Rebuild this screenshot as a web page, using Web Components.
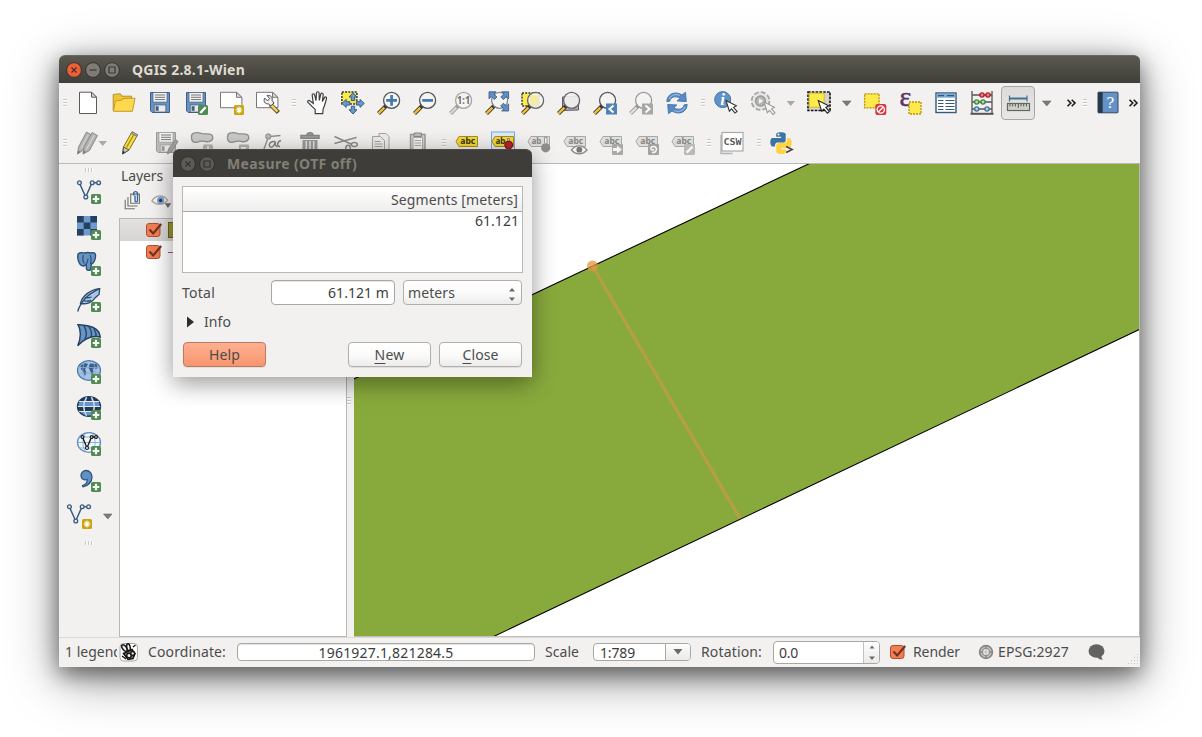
<!DOCTYPE html>
<html lang="en">
<head>
<meta charset="utf-8">
<title>QGIS 2.8.1-Wien</title>
<style>
  html, body { margin: 0; height: 100%; background: #fff; overflow: hidden; }
  body { font: 14px/20px "Noto Sans", "Open Sans", sans-serif; color: #4c4c4c; position: relative; box-sizing: border-box; padding: 55px 62px 70px 59px; }
</style>
</head>
<body>
<qgis-window></qgis-window>
<measure-dialog></measure-dialog>
<script>
const glass = (c = '#555', h = '#f5c02c', inner = '', o = '#333') => `
  <path d="M9 15 1.5 22.5" stroke="${o}" stroke-width="4"/><path d="M7.4 16.6 1.6 22.4" stroke="${h}" stroke-width="2.4"/>
  <circle cx="14.6" cy="9.4" r="8" fill="#f4f4f2" fill-opacity=".88" stroke="${c}" stroke-width="1.3"/>${inner}`;
const plus = `<rect x="14" y="14" width="10" height="10" rx="1.6" fill="#4f8c52"/><path d="M19 15.7v6.6M15.7 19h6.600" stroke="#fff" stroke-width="2.2"/>`;
const star = (x = 14, y = 14) => `<g transform="translate(${x} ${y})"><rect width="10" height="10" rx="1.6" fill="#c9a40c"/><path d="M5 1.600v6.800M1.600 5h6.800M2.700 2.700l4.600 4.600M7.300 2.700 2.700 7.300" stroke="#fff" stroke-width="1.100"/></g>`;
const floppy = (f, l) => `<path d="M2.5 1.5h19v20H4.2L2.5 19.8z" fill="${f}" stroke="${l}"/><rect x="5" y="1.5" width="14" height="9.6" fill="#f3f3ef" stroke="${l}" stroke-width=".7"/><path d="M7 4h10M7 6.3h10M7 8.6h10" stroke="#555" stroke-opacity=".8" stroke-width="1"/><rect x="6.2" y="14" width="11.6" height="7" fill="#ecebe6" stroke="${l}" stroke-width=".7"/><rect x="7.6" y="15.2" width="3" height="4.6" fill="${l}"/>`;
const label = (f, s, t, txt = 'abc', x = 12.8) => `<path d="M4 5.500h18.500v10H4L1 10.500z" fill="${f}" stroke="${s}"/><text x="${x}" y="13.400" font-size="9" font-weight="bold" font-family="Noto Sans, sans-serif" text-anchor="middle" textLength="${txt.length * 5}" lengthAdjust="spacingAndGlyphs" fill="${t}">${txt}</text>`;
const greyLabel = (t, x) => label('#dededc', '#a7a7a5', '#858583', t, x);
const vee = `<path d="M2.3 2.7 8.7 17 15 2.7h6.6" stroke="#3b5c7c" stroke-width="1.5" fill="none"/><g fill="#dfe9f2" stroke="#3b5c7c" stroke-width="1.3"><circle cx="2.4" cy="2.7" r="1.9"/><circle cx="8.8" cy="17" r="1.9"/><circle cx="15.2" cy="2.7" r="1.9"/><circle cx="21.6" cy="2.7" r="1.9"/></g>`;
const pointer = (x, y, f, s) => `<path transform="translate(${x} ${y})" d="M0 0 3.4 10.6 5.6 8.4 9 12.6 11 11 7.6 6.8 10.4 5.2z" fill="${f}" stroke="${s}" stroke-width="1.1"/>`;
const blob = `<path d="M1.5 6C1 1 8 1.2 12 2.6c4 .9 11-1 10.8 4 0 4-5 4.6-8 3.8-3-1-5-.2-8 .8C3 12 1.3 9.5 1.5 6z" fill="#cacac8" stroke="#8f8f8d" stroke-width="1.3"/>`;

const ICONS = {
  fileNew: `<path d="M3.5 1.2h12l5 5v16.3h-17z" fill="#fff" stroke="#5b5b5b"/><path d="M15.5 1.2v5h5z" fill="#d8d8d8" stroke="#5b5b5b"/>`,
  open: `<path d="M1.2 19.8V3.4L8.5 2.8l1.3 2.4h9.7V9" fill="#f3c432" stroke="#b3922a"/><path d="M1.5 20.3 3.3 10l6.7-1 1-1.6 12-.2-2.6 13.1z" fill="#ffd84d" stroke="#bf9c2b"/>`,
  save: floppy('#6892c4', '#3f5f84'),
  saveAs: floppy('#6892c4', '#3f5f84') + `<rect x="14" y="14" width="10" height="10" rx="1.6" fill="#4f8c52"/><path d="m16.3 22 5.3-5.8" stroke="#fff" stroke-width="2.4"/>`,
  composer: `<path d="M.5 1.3h16l5.4 5.2v10.2H.5z" fill="#fff" stroke="#777"/><path d="M16.5 1.3v5h5.4z" fill="#ddd" stroke="#777"/>` + star(),
  manager: `<path d="M.5 1.3h16l5.4 5.2v10.2H.5z" fill="#fff" stroke="#777"/><path d="M16.5 1.3v5h5.4z" fill="#ddd" stroke="#777"/><path d="m14.4 13.5 8 8" stroke="#5c4a18" stroke-width="4.4"/><path d="m15 14 6.6 6.6" stroke="#efcf69" stroke-width="2.6"/><path d="m8.800 7.200 2.700 2.700 2.200-2.300-2.600-3c3.400-.6 5.700 1.400 5 4.800l1.900 2.700-3.300 2.700-2.200-1.900c-3.400.4-5.600-2.600-3.700-5.700z" fill="#f0f0ee" stroke="#444"/>`,
  hand: `<g transform="translate(1.800 0)"><path d="M5.2 15.4 1 11.2C.2 10 2 9 3 9.8l3.500 2.600L5.400 4.300c-.2-1.800 2-2.100 2.400-.4L9.200 9.600 9.700 2c.1-1.700 2.500-1.700 2.600 0l.2 7.400 1.500-6.200c.4-1.500 2.600-1.200 2.400.5l-.9 6.800 2.200-3.900c.8-1.300 2.400-.4 2 1-1.400 5-1.600 7-3.300 10.200l-.5 4.900H8.400v-4.300z" fill="#fff" stroke="#3d3d3d" stroke-width="1.200"/></g>`,
  pan: `<rect x=".9" y=".9" width="15" height="12" fill="#fce94a" stroke="#333" stroke-width="1.5" stroke-dasharray="2 1.2"/><g fill="#6b98c9" stroke="#385f88" stroke-width="1"><path d="M12 1.800 16 6h-2.300v3.600h-3.400V6H8z"/><path d="M12 23 8 18.800h2.300v-3.600h3.400v3.600H16z"/><path d="M.9 12.400 5.200 8.400v2.300h3.600v3.400H5.200v2.300z"/><path d="m23.300 12.400-4.300-4v2.300h-3.600v3.400H19v2.300z"/></g>`,
  zoomIn: glass('#555', '#f5c02c', `<path d="M14.600 4v10.800M9.200 9.400H20" stroke="#4279ae" stroke-width="2.700"/>`),
  zoomOut: glass('#555', '#f5c02c', `<path d="M9.200 9.400H20" stroke="#4279ae" stroke-width="2.700"/>`),
  zoomOne: glass('#a4a4a2', '#d8d8d6', `<text x="14.600" y="13" text-anchor="middle" font-size="10" font-weight="bold" textLength="13" lengthAdjust="spacingAndGlyphs" font-family="Noto Sans,sans-serif" fill="#6f6f6d">1:1</text>`, '#999'),
  zoomFull: glass('#888') + `<g fill="#5f8fc3" stroke="#31557c" stroke-width=".8"><path d="M4 .8h7L8.900 3l3 3-2.600 2.600-3-3L4 7.800z"/><path d="M23.600.8v7l-2.200-2.200-3 3L15.800 6l3-3L16.600.8z"/><path d="M23.600 20h-7l2.200-2.200-3-3 2.600-2.600 3 3 2.200-2.200z"/></g>`,
  zoomSel: `<rect x="1" y="2" width="17" height="13" fill="#fce94a" stroke="#333" stroke-width="1.400" stroke-dasharray="2 1.200"/>` + glass('#666', '#f5c02c', `<path d="M9 4.500h8.500v9.500H9z" fill="#f3e98f" opacity=".75"/>`),
  zoomLayer: `<path d="m5.500 6 16-1v14l-16 .5z" fill="#b5a8b5" stroke="#67596a"/>` + glass('#666'),
  zoomLast: glass('#555') + `<rect x="13" y="12.500" width="11" height="11" fill="#4f82b6"/><path d="m20.500 14.600-4 3.400 4 3.400" fill="none" stroke="#fff" stroke-width="2"/>`,
  zoomNext: glass('#999', '#dededc', '', '#999') + `<rect x="13" y="12.500" width="11" height="11" fill="#a7a7a5"/><path d="m16.500 14.600 4 3.400-4 3.400" fill="none" stroke="#fff" stroke-width="2"/>`,
  refresh: `<g fill="#568ac2" stroke="#376ba6" stroke-width=".8"><path d="M1.800 10.500C2 3 10-.5 17 3.900l3.500-2.600.8 9.300-9.200-.6 3-2.700C10.500 4.400 5.300 6 4.800 10.300z"/><path d="M22.200 13.500C22 21 14 24.500 7 20.100l-3.500 2.600-.8-9.300 9.200.6-3 2.700c4.600 2.900 9.800 1.300 10.300-3z"/></g><path d="M4 8C6 3.500 11 2.500 15 4.500M20 16c-2 4.500-7 5.500-11 3.500" stroke="#8db4dd" fill="none" stroke-width="1.300"/>`,
  identify: `<circle cx="8.700" cy="8.600" r="8" fill="#5e93c9" stroke="#4474a7"/><text x="8.700" y="14" text-anchor="middle" font-family="Liberation Serif,serif" font-size="17" font-weight="bold" font-style="italic" fill="#fff">i</text>` + pointer(12, 9.500, '#fff', '#333'),
  action: `<circle cx="10.500" cy="10" r="8.600" fill="#e6e6e4" stroke="#a5a5a3" stroke-width="2.400" stroke-dasharray="4.800 1.950"/><circle cx="10.500" cy="10" r="8" fill="#e6e6e4"/><circle cx="10.500" cy="10" r="5" fill="#b5b5b3" stroke="#999997" stroke-width="1.400"/><path d="m9 7.200 4.400 2.800L9 12.800z" fill="#f2f1f0"/>` + pointer(14, 11, '#f6f6f4', '#999'),
  select: `<rect x="1" y="1" width="22" height="18.500" fill="#d2d2d0" stroke="#111" stroke-width="1.600" stroke-dasharray="2.600 1.200"/><path d="M2.200 2.200h15v14h-15z" fill="#fdeb4b" stroke="#d9bd1f"/>` + pointer(11.300, 9.600, '#fff', '#222'),
  deselect: `<g transform="translate(.8)"><rect x=".8" y="2.800" width="14.500" height="14" fill="#fce94a" stroke="#b98f12" stroke-width="1.300" stroke-dasharray="2 1"/><rect x="11.500" y="13" width="11" height="11" rx="2" fill="#d9353b"/><circle cx="17" cy="18.500" r="3.600" fill="none" stroke="#fff" stroke-width="1.400"/><path d="m14.500 21 5-5" stroke="#fff" stroke-width="1.400"/></g>`,
  expr: `<text x=".5" y="15" font-family="Liberation Serif,serif" font-size="28" fill="#5d3568" stroke="#5d3568" stroke-width=".5">ε</text><rect x="10" y="11" width="12" height="12" fill="#fce94a" stroke="#b98f12" stroke-width="1.300" stroke-dasharray="2 1"/>`,
  table: `<g transform="translate(-1)"><rect x="2" y="2" width="20" height="19.500" fill="#fff" stroke="#34597c" stroke-width="1.400"/><path d="M2.700 4.700h18.600" stroke="#7daad8" stroke-width="4"/><path d="M4 4.700h6M13 4.700h7M4 9.500h5.500M11.500 9.500h9M4 12.500h5.500M11.500 12.500h9M4 15.500h5.500M11.500 15.500h9M4 18.500h5.500M11.500 18.500h9" stroke="#34597c" stroke-width="1.200"/></g>`,
  abacus: `<path d="M2 0v23M22 0v23M2 4h20M2 11h20M2 18h20" stroke="#555" stroke-width="1.300"/><path d="M.5 22.800h23" stroke="#555" stroke-width="2"/><g stroke-width="1.400"><g fill="#ec8181" stroke="#b42025"><circle cx="12" cy="4" r="2.100"/><circle cx="18" cy="4" r="2.100"/></g><g fill="#aedba7" stroke="#418740"><circle cx="6.700" cy="11" r="2.100"/><circle cx="13" cy="11" r="2.100"/></g><g fill="#b6d0e8" stroke="#426f99"><circle cx="6.700" cy="18" r="2.100"/><circle cx="17" cy="18" r="2.100"/></g></g>`,
  ruler: `<path d="M3.500 7.500H21" stroke="#42708e" stroke-width="2"/><path d="M3.500 4.500v6M21 4.500v6" stroke="#42708e" stroke-width="1.200"/><rect x="1.500" y="12.500" width="22" height="7" fill="#cfd2c9" stroke="#626760" stroke-width="1.200"/><path d="M4 13v2.500M6.700 13v2.500M9.400 13v2.500M12.300 13v4M15 13v2.500M17.700 13v2.500M20.400 13v2.500" stroke="#555"/>`,
  help: `<rect x="2" y="1.200" width="20" height="20.600" rx=".6" fill="#6492c6" stroke="#30475e"/><rect x="2" y="1.200" width="4.700" height="20.600" fill="#273a4d"/><text x="14.300" y="16.700" font-size="15" text-anchor="middle" font-family="DejaVu Serif,serif" fill="#fff">?</text>`,
  chevrons: `<path d="m8.500 8.700 3.300 3.300-3.300 3.300M12.700 8.700 16 12l-3.300 3.300" fill="none" stroke="#1c1c1c" stroke-width="1.600"/>`,
  arrow: `<path d="M7.500 10H16l-4.200 5z" fill="#7b7b79" stroke="#656563" stroke-width=".6"/>`,
  arrowDim: `<path d="M7.500 10H16l-4.200 5z" fill="#a9a9a7"/>`,
  edits: `<g fill="#b2b2b0" stroke="#8d8d8b"><path d="m1.500 23 1-7L10.500 1 15.500 4 7.500 19z"/><path d="m7 23 1-7L16 1.500l5.500 3-8 15z"/></g><path d="M5 17.500 12.500 3.500M10.500 18l8-14" stroke="#d2d2d0" stroke-width="1.300"/><path d="m7 23 .8-3.500 2.200 1.500zM1.500 23l.8-3.500L4.500 21z" fill="#777"/>`,
  pencil: `<g transform="translate(1)"><path d="M3.600 23 4.500 16 13 .8 18.600 3.900 10 19z" fill="#f5e048" stroke="#7d6d1b"/><path d="M3.600 23 4.500 16l5.500 3z" fill="#c9c6bb" stroke="#555"/><path d="m3.600 23 .4-3 2 1.100z" fill="#222"/><path d="m12.200 2.300 5.600 3 .8-1.400L13 .8z" fill="#bbb" stroke="#777"/><path d="M7.500 16.500 14.500 4" stroke="#a3921b" stroke-width="1.400"/></g>`,
  saveEdit: floppy('#bcbcba', '#999997') + `<path d="m13.500 23 1-5 7-9.500 2.500 2-6.500 9.800z" fill="#a2a2a0" stroke="#8a8a88"/>`,
  blobA: blob + `<rect x="13" y="13.500" width="10" height="10" rx="1" fill="#b4b4b2"/><path d="M18 15v7M14.500 18.500h7" stroke="#eee" stroke-width="1.600"/>`,
  blobB: blob + `<rect x="13" y="13.500" width="10" height="10" rx="1" fill="#b4b4b2"/><path d="M15 22v-6h6z" fill="#eee"/>`,
  node: `<path d="M.5 22 6.500 5.500 18.500 4.500" fill="none" stroke="#8c8c8a" stroke-width="1.300"/><circle cx="6.300" cy="5.500" r="2.700" fill="#b5b5b3" stroke="#8c8c8a"/><path d="M13 10.500c-4-.5-6.500 2-5.500 4.500s5 1 6-4.500c-.5 3 0 5 2 5M19 9.500c-4 1-4.500 6-1 6" fill="none" stroke="#808080" stroke-width="1.400"/>`,
  trash: `<path d="M3 4.500h18v2.800H3zM9 4.300c0-3.300 6-3.300 6 0" fill="#a4a4a2" stroke="#858583" stroke-width="1.500"/><path d="M4.500 9h15v14h-15z" fill="#9a9a98"/><path d="M8.300 10v13M12 10v13M15.700 10v13" stroke="#e3e3e1" stroke-width="1.500"/>`,
  cut: `<path d="m.5 5.500 17.500 8M.5 12.500 22.500 6.500" stroke="#8c8c8a" stroke-width="1.600"/><g fill="none" stroke="#8c8c8a" stroke-width="1.500"><ellipse cx="20.300" cy="13.500" rx="3" ry="2"/><ellipse cx="14" cy="17.500" rx="2.300" ry="3.300"/></g>`,
  copy: `<g fill="#ececea" stroke="#a4a4a2"><path d="M9 2.500h7l3 3V20H9z"/><path d="M2.500 5.500h8l4 4V23h-12z"/></g><path d="M4.500 10.500h6M4.500 13h8M4.500 15.500h8" stroke="#a4a4a2"/>`,
  paste: `<path d="M4.500 3.500h14.500V23H4.500z" fill="#d0d0ce" stroke="#989896" stroke-width="1.400"/><path d="M7 6.500h9.500V22H7z" fill="#f3f3f1" stroke="#aaa"/><path d="M8 2h7.500v3.500H8z" fill="#bbb" stroke="#888"/><path d="M8.500 9.500h6.500M8.500 12h6.500M8.500 14.500h6.500" stroke="#aaa"/>`,
  labelOn: label('#f3d93a', '#a98f16', '#3b3509'),
  labelPin: `<rect x=".5" y="1" width="23" height="22" fill="#dceafa" stroke="#7aa9de"/>` + label('#f3d93a', '#a98f16', '#3b3509', 'ab', 9.500) + `<path d="M16.500 11V7.500h2V11" fill="#ddd" stroke="#777" stroke-width=".8"/><circle cx="17.700" cy="14" r="4" fill="#b3262b" stroke="#8a1015"/>`,
  labelA: greyLabel('ab', 9.500) + `<path d="M17.500 12V6.500H20v6" fill="#eee" stroke="#999"/><circle cx="18.700" cy="16.800" r="4.600" fill="#8e8e8c"/>`,
  labelEye: greyLabel() + `<path d="M8.500 19c4-5.600 11-5.600 15.500 0-4.500 5-11.500 5-15.500 0z" fill="#f5f5f3" stroke="#8a8a88" stroke-width="1.300"/><circle cx="16.300" cy="18.700" r="2.900" fill="#777"/>`,
  labelMove: greyLabel() + `<rect x="13" y="13" width="11" height="11" rx="1" fill="#a9a9a7"/><path d="M14 17h4v-2.500l5 4-5 4V20h-4z" fill="#f5f5f3"/>`,
  labelRot: greyLabel() + `<rect x="13" y="13" width="11" height="11" rx="1" fill="#a2a2a0"/><path d="M17 21.500c5 1 6-6 1.500-6s-2.500 5 .5 3" fill="none" stroke="#f5f5f3" stroke-width="1.600"/>`,
  labelEdit: greyLabel() + `<rect x="13" y="13" width="11" height="11" rx="1" fill="#b9b9b7"/><path d="m15.600 21.600 6-6" stroke="#f5f5f3" stroke-width="2.400"/>`,
  csw: `<path d="M1 4v18.500h11.500" fill="none" stroke="#b5b5b3" stroke-width="1.400"/><rect x="2" y="1.500" width="21" height="18.500" fill="#fff" stroke="#aaa" stroke-width="1.200"/><text x="12.500" y="13.500" text-anchor="middle" font-size="9" font-weight="bold" font-family="DejaVu Sans Mono,monospace" textLength="18" lengthAdjust="spacingAndGlyphs" fill="#5a5a5a">CSW</text>`,
  python: `<g transform="translate(-.8 0)"><path d="M7 5V3C7 .5 16.500.5 16.500 3v6c0 2-1 2.500-3 2.500H8.500c-2 0-2.700 1-2.700 4H3.500C.6 15.500 0 7 3.500 7H12V5.800H7z" fill="#3c73a4"/><path d="M17 18.500v2c0 3.400-10 3.400-10 0v-5.600c0-2 1-2.900 3-2.900h4.700c2.500 0 3.300-1.500 3.300-5h2C23.500 7 23 17 20 17h-8v1.500z" fill="#ffd33f"/><circle cx="9.300" cy="3.500" r="1" fill="#fff"/><path d="m17 15.500 6 3-6 3" fill="none" stroke="#444" stroke-width="1.500"/></g>`,
  vector: vee + plus,
  vectorNew: vee + star(15, 15),
  raster: `<path d="M0 0h20v19.500H0z" fill="#6f9ad0"/><path d="M0 0h6.700v6.500H0zM13.400 0H20v6.500h-6.600zM6.700 6.500h6.700V13H6.700zM0 13h6.700v6.500H0zM13.400 13H20v6.500h-6.600z" fill="#26405f"/>` + plus,
  postgis: `<path d="M1 2c2-2 5-1 7-1 2-.8 4-.5 6 0 3-.8 5 0 4.500 3.500 0 4-2.500 7-4 7.500l-1 5.500c-1 1.500-3.500 1-4-.5l-.3-4.500-2 1.300C2.500 15 1 8 .7 5.500z" fill="#6795c4" stroke="#2b4f76" stroke-width="1.400"/><path d="M6.500 3c-1 3-1 6 .8 8.500M13 3c1.500 3 1.400 6 .5 9M9 12.500c1-2 2-3 2-6" fill="none" stroke="#2b4f76" stroke-width="1.200"/>` + plus,
  spatialite: `<path d="M22.700.6C14 1 5 8 3.500 15.500c6 1 12-1 14.500-5.500l4-3.500z" fill="#a9c6e4" stroke="#2d4c6c" stroke-width="1.300"/><path d="M22.700.6C13 5 4 12 .7 23.500M8 9.500c2 .6 4 .4 6.500-.5M6 12.500c3 1 5 .8 8 0" fill="none" stroke="#2d4c6c" stroke-width="1.300"/>` + plus,
  mssql: `<path d="M1 .7C10 1.500 22 2 23.300 13 16 11.500 8 14 .7 21.700 4 14 4.500 7 1 .7z" fill="#6694c6" stroke="#25415e" stroke-width="1.400"/><path d="M7 1.800c3 5 3 9 1 13.500M12 2.800c3 4 3 7 2 10.500M17 5c2 3 2.500 5 2 8" stroke="#25415e" stroke-width="1.300" fill="none"/>` + plus,
  wms: `<ellipse cx="12" cy="10.500" rx="11.500" ry="9.800" fill="#a6c3e4" stroke="#4a77a8" stroke-width="1.200"/><path d="M3.500 5.500 8 3l3 1-1.500 3L8 9.500l1.500 3L8 16l-2-4.500-2-2zM13 3.500l6.500.5 1.500 4-2.500 1-1.500-1.500-1 2 .5 3-1.500 3-2-5-1.500-3z" fill="#3a5f88"/><path d="M.8 7.500h22.400M.8 13h22.400M8 1.500c-3 6-3 12 0 18M16 1.500c3 6 3 12 0 18" fill="none" stroke="#86abd3" stroke-width=".8"/>` + plus,
  wcs: `<ellipse cx="12" cy="10.500" rx="11.500" ry="9.800" fill="#6795c8" stroke="#223c58" stroke-width="1.400"/><path d="M.6 10.500h7v5H2zM23.400 10.500h-6v5H22zM7.500 5.500h-5C5 1.500 8 1 9.500 1zM16.500 5.500h5C19 1.500 16 1 14.500 1zM8 10.500h9v5H8zM9 5.500 10.500 1h3L15 5.500z" fill="#223c58"/><path d="M2 5.500h20M.8 10.500h22.400M2 15.500h20M9.500 1c-3.500 6-3.500 13 0 19M14.500 1c3.500 6 3.500 13 0 19" fill="none" stroke="#dfe9f5" stroke-width="1.200"/>` + plus,
  wfs: `<ellipse cx="12" cy="10.500" rx="11.500" ry="9.800" fill="#f4f7fb" stroke="#5c8bc2" stroke-width="1.300"/><path d="M2 5h20M.8 10.500h22.400M2 16h20M8.500 1.500c-3.500 6-3.500 12 0 18M15.500 1.500c3.500 6 3.500 12 0 18" fill="none" stroke="#8ab0dc" stroke-width="1"/><path d="m5.500 5 4.500 11 4.500-11h4.500" fill="none" stroke="#1c1c1c" stroke-width="1.400"/><g fill="#fff" stroke="#1c1c1c" stroke-width="1.200"><circle cx="5.500" cy="5" r="1.400"/><circle cx="10" cy="16" r="1.500"/><circle cx="14.600" cy="5" r="1.400"/><circle cx="19" cy="5" r="1.400"/></g>` + plus,
  comma: `<path d="M5.500 17.500c4-1.300 5.200-4 4.500-6-3 1.200-6-.5-6-4C4 4.500 6.500 2.500 9 2.500c3.500 0 6 2.800 6 6.500 0 5-4 9-9 9.800z" fill="#6191c5" stroke="#2e5379" stroke-width="1.300"/>` + plus,
  group: `<g fill="none" stroke="#6d7268" stroke-width="1.200"><path d="M3.500 10.500v10H14"/><path d="M6.500 7.500v10H17"/><path d="M9.500 4.500h9.500v10H9.500z" fill="#f6f6f5"/></g><path d="M12.700 6V4c0-3 4.200-3 4.200 0v7.500c0 2-2.700 2-2.700 0V6" fill="none" stroke="#3465a4" stroke-width="1.500"/>`,
  eye: `<path d="M1 12c4-7 13-7 17-1-4 6-12 6-17 1z" fill="#f4f4f4" stroke="#b0a9a3" stroke-width="1.600"/><circle cx="10.500" cy="11.400" r="4" fill="#7ba3cf"/><circle cx="10.500" cy="11.400" r="1.800" fill="#203a58"/><path d="M15 14.500h7l-3.500 5z" fill="#666"/>`,
  log: `<rect x="3" y="3.500" width="17.500" height="17.500" rx="3.500" fill="#fbfbfa" stroke="#aaa"/><g stroke="#151515" fill="#f4f4f2" stroke-width="1.500"><ellipse cx="7.500" cy="8" rx="1.900" ry="3.800" transform="rotate(-38 7.500 8)"/><ellipse cx="11.500" cy="7.300" rx="1.700" ry="3.600" transform="rotate(-12 11.500 7.300)"/><path d="M6.500 13.500 15 9.500l3 4-2 5-5 1z" fill="#8a8a88"/><circle cx="12" cy="15.500" r="2.300"/><circle cx="15.700" cy="13.500" r="1.900"/></g><path d="m16 7 2.500-2M5 16l4 3" stroke="#151515" stroke-width="1.300"/>`,
  globe: `<circle cx="12" cy="12" r="7" fill="#c4c4c2" stroke="#858583" stroke-width="1.800"/><path d="M12 5v14M5 12h14" stroke="#8a8a88" stroke-width="1.600"/><circle cx="12" cy="12" r="4" fill="#ececea" stroke="#8f8f8d" stroke-width="1.400"/><path d="M12 8.500v7M8.500 12h7" stroke="#b5b5b3"/>`,
  bubble: `<ellipse cx="12.500" cy="11" rx="8" ry="6.700" fill="#636361"/><path d="M12.500 16c1 2 3 3.800 6.500 3.800-1.300-1.300-1.700-3-1.500-4.800z" fill="#636361"/>`,
};

/* Base class: renders the template string of a subclass in an open shadow root. */
class Base extends HTMLElement {
  connectedCallback() {
    if (this.shadowRoot) return;
    const t = document.createElement('template');
    t.innerHTML = `<style>:host{display:block;box-sizing:border-box}*{box-sizing:border-box}${this.css()}</style>${this.html()}`;
    this.attachShadow({ mode: 'open' }).append(t.content.cloneNode(true));
    this.ready();
  }
  css() { return ''; }
  html() { return '<slot></slot>'; }
  ready() {}
}
const def = (n, c) => customElements.define(n, c);

def('gis-icon', class extends Base {
  css() { const s = this.getAttribute('size') || 24; return `:host{display:block;flex:none;width:${s}px;height:${s}px}svg{display:block;width:100%;height:100%;overflow:visible}`; }
  html() { return `<svg viewBox="0 0 24 24" fill="none">${ICONS[this.getAttribute('name')] || ''}</svg>`; }
});

def('tool-item', class extends Base {
  css() {
    const w = this.getAttribute('w') || 36;
    return `:host{flex:none;display:flex;align-items:center;justify-content:center;width:${w}px;height:36px}
      :host([checked]) div{width:34px;height:34px;border:1px solid #a9a7a4;border-radius:4px;background:linear-gradient(#dcdbda,#e8e7e6);display:grid;place-items:center}`;
  }
  html() { return `<div><gis-icon name="${this.getAttribute('icon')}"></gis-icon></div>`; }
});

def('tool-grip', class extends Base {
  css() {
    const w = this.getAttribute('w') || 13;
    return `:host{flex:none;width:${w}px;display:grid;justify-content:end;align-content:center;padding-right:3px}
      :host([side]){width:auto;justify-content:center;padding:0;height:9px}
      i{display:block;width:4px;height:8px;background:repeating-linear-gradient(#c9c7c5 0 1px,#fff 1px 2px,transparent 2px 3px)}
      :host([side]) i{width:8px;height:4px;background:repeating-linear-gradient(90deg,#c9c7c5 0 1px,#fff 1px 2px,transparent 2px 3px)}`;
  }
  html() { return '<i></i>'; }
});

def('tool-row', class extends Base {
  css() { return `:host{display:flex;height:40px;align-items:center}`; }
});

def('title-bar', class extends Base {
  css() {
    return `:host{display:flex;align-items:center;height:28px;padding-left:7px;gap:3px;border-radius:6px 6px 0 0;background:linear-gradient(#5a584f,#3f3e39);border-top:1px solid #6a6860;color:#dfdbd2;font-weight:bold}
      :host([dim]){background:#3e3d39;border-top-color:#4b4a45;color:#827f77}
      svg{width:16px;height:16px;display:block}
      .t{margin-left:9px;padding-top:1px}`;
  }
  html() {
    const dim = this.hasAttribute('dim');
    const b = (fill, p) => `<svg viewBox="0 0 16 16"><circle cx="8" cy="8" r="7.400" fill="${fill}" stroke="${dim ? '#32312e' : '#33322e'}"/><path d="${p}" fill="none" stroke="${dim ? '#343330' : '#3a3834'}" stroke-width="1.200"/></svg>`;
    const g = dim ? '#5c5b56' : '#7e7c74';
    return b(dim ? g : '#ee5f35', 'm5.500 5.500 5 5m0-5-5 5') + (dim ? '' : b(g, 'M4.500 8h7')) + b(g, 'M5 5h6v6H5z') + '<div class="t"><slot></slot></div>';
  }
});

def('check-box', class extends Base {
  css() { return `:host{flex:none;width:18px;height:18px}svg{display:block}`; }
  html() { return `<svg width="18" height="18" viewBox="0 0 18 18"><rect x="1.500" y="2.500" width="13.500" height="13" rx="2.500" fill="#f27d53" stroke="#b04e30"/><path d="m4.500 8.500 3.700 4 8-9.500" fill="none" stroke="#6d3322" stroke-width="2.100"/></svg>`; }
});

def('layers-panel', class extends Base {
  css() {
    return `:host{display:flex;flex-direction:column;width:228px;height:100%}
      .h{height:23px;padding:1px 0 0 2px;line-height:21px}
      .tools{height:31px;display:flex;align-items:center;padding:0 0 3px 3px;gap:7px}
      .tree{flex:1;border:1px solid #b9b7b4;background:#fff}
      .row{height:22px;display:flex;align-items:center;padding-left:25px;gap:5px}
      .sel{background:linear-gradient(#e2e1e0,#d6d5d3)}
      .sw{width:16px;height:16px;border:1px solid #6b6118;background:#9c9536}
      .ln{width:16px;height:1px;background:#8b5a94}`;
  }
  html() {
    return `<div class="h"><fit-text w="42">Layers</fit-text></div>
      <div class="tools"><gis-icon name="group" size="22"></gis-icon><gis-icon name="eye" size="22"></gis-icon></div>
      <div class="tree"><div class="row sel"><check-box></check-box><div class="sw"></div></div><div class="row"><check-box></check-box><div class="ln"></div></div></div>`;
  }
});

def('map-canvas', class extends Base {
  css() { return `:host{flex:1;background:#fff;height:473px;border-right:1px solid #b9b7b4;border-bottom:1px solid #c3c1be}svg{display:block;width:100%;height:100%}`; }
  html() {
    return `<svg viewBox="354 164 785 472" preserveAspectRatio="none"><path d="M340 385.600 809.500 163.500 1150 3V324.500L480 643H340z" fill="#88aa3c" stroke="#000" stroke-width="1.100"/>
      <path d="M592.500 266 740 518.500" stroke="#c79a45" stroke-opacity=".72" stroke-width="3.400"/><circle cx="592.500" cy="266" r="5.500" fill="#e09443" fill-opacity=".75"/></svg>`;
  }
});

def('side-tools', class extends Base {
  css() {
    return `:host{flex:none;width:60px;display:flex;flex-direction:column;align-items:center;padding-top:1px}
      .last{align-self:stretch;display:flex;align-items:center;padding-left:2px}.last tool-item+tool-item{margin-left:-1px}.last+tool-grip{margin-top:4px}`;
  }
  html() {
    return '<tool-grip side></tool-grip>' + ['vector', 'raster', 'postgis', 'spatialite', 'mssql', 'wms', 'wcs', 'wfs', 'comma'].map(n => `<tool-item icon="${n}"></tool-item>`).join('') +
      `<div class="last"><tool-item icon="vectorNew"></tool-item><tool-item icon="arrow" w="24"></tool-item></div><tool-grip side></tool-grip>`;
  }
});

def('text-field', class extends Base {
  css() {
    return `:host{display:flex;align-items:center;flex:none;width:${this.getAttribute('w')}px;height:${this.getAttribute('h')}px;border:1px solid #a9a7a3;border-radius:4px;background:#fff;box-shadow:inset 0 1px 1px #e4e3e2;padding:1px 5px 0;color:#3c3c3c}
      :host([align=center]){justify-content:center}:host([align=right]){justify-content:flex-end}`;
  }
});

def('status-bar', class extends Base {
  css() {
    return `:host{display:flex;height:30px;align-items:center;border-top:1px solid #dcdad8;padding:0 0 1px 6px;position:relative}
      .l{width:52px;overflow:hidden;white-space:nowrap}
      .combo{display:flex;width:98px;height:18px;border:1px solid #a9a7a3;border-radius:4px;background:#fff;margin-left:14px;overflow:hidden;align-items:center;color:#3c3c3c}
      .combo fit-text{margin-left:6px;padding-top:1px}.combo span{margin-left:auto;width:25px;height:18px;border-left:1px solid #a9a7a3;background:linear-gradient(#fff,#e9e8e7);display:grid;place-items:center}
      .spin{display:flex;width:107px;height:23px;border:1px solid #a9a7a3;border-radius:4px;background:#fff;margin-left:11px;overflow:hidden;align-items:center;color:#3c3c3c}
      .spin fit-text{margin-left:5px;padding-top:1px}.spin svg{margin-left:auto;border-left:1px solid #c4c2c0;background:linear-gradient(#fff,#e9e8e7)}
      .size{align-self:flex-end;margin-left:auto}`;
  }
  html() {
    return `<div class="l"><fit-text w="57">1 legend</fit-text></div><gis-icon name="log" size="24"></gis-icon>
      <fit-text w="78" style="margin-left:7px">Coordinate:</fit-text>
      <text-field w="298" h="18" align="center" style="margin-left:11px"><fit-text w="135">1961927.1,821284.5</fit-text></text-field>
      <fit-text w="34" style="margin-left:10px">Scale</fit-text>
      <div class="combo"><fit-text w="35">1:789</fit-text><span><svg width="12" height="6"><path d="M1.500 0h9L6 5.500z" fill="#6b6b6b"/></svg></span></div>
      <fit-text w="61" style="margin-left:10px">Rotation:</fit-text>
      <div class="spin"><fit-text w="19">0.0</fit-text><svg width="16" height="23"><path d="M5.500 7.500 8 4.500l2.500 3zM5 15.500h6l-3 3.500z" fill="#6b6b6b"/></svg></div>
      <check-box style="margin-left:9px"></check-box><fit-text w="47" style="margin-left:6px">Render</fit-text>
      <gis-icon name="globe" size="22" style="margin-left:15px"></gis-icon><fit-text w="71" style="margin-left:1px">EPSG:2927</fit-text>
      <gis-icon name="bubble" style="margin-left:15px"></gis-icon>
      <svg class="size" width="13" height="13" fill="#c9c7c4"><path d="M10 1h1v1h-1zM7 4h1v1H7zM10 4h1v1h-1zM4 7h1v1H4zM7 7h1v1H7zM10 7h1v1h-1zM1 10h1v1H1zM4 10h1v1H4zM7 10h1v1H7zM10 10h1v1h-1z"/></svg>`;
  }
});

def('qgis-window', class extends Base {
  css() {
    return `:host{width:1081px;height:612px;display:flex;flex-direction:column;background:#f2f1f0;border-radius:6px 6px 0 0;box-shadow:0 7px 22px rgba(0,0,0,.5),0 12px 52px rgba(0,0,0,.4)}
      .bars{height:80px}
      .main{display:flex;flex:1;min-height:0;border-top:1px solid #bbb9b6}
      .split{width:7px;display:grid;place-items:center}`;
  }
  html() {
    const it = (s, w) => s.split(' ').map(n => `<tool-item icon="${n}"${w ? ` w="${w}"` : ''}></tool-item>`).join('');
    return `<title-bar><fit-text w="113">QGIS 2.8.1-Wien</fit-text></title-bar>
      <div class="bars">
        <tool-row><tool-grip w="11"></tool-grip>${it('fileNew open save saveAs composer manager')}<tool-grip></tool-grip>
          ${it('hand pan zoomIn zoomOut zoomOne zoomFull zoomSel zoomLayer zoomLast zoomNext refresh')}<tool-grip></tool-grip>
          ${it('identify action')}${it('arrowDim', 21)}${it('select')}${it('arrow', 20)}${it('deselect expr')}${it('table', 35)}${it('abacus')}
          <tool-item icon="ruler" checked></tool-item>${it('arrow', 21)}${it('chevrons', 28)}<tool-grip w="5"></tool-grip>${it('help')}${it('chevrons', 14)}</tool-row>
        <tool-row><tool-grip w="11"></tool-grip>${it('edits')}<tool-item icon="arrowDim" w="6" style="margin-left:-6px;margin-right:6px"></tool-item>${it('pencil saveEdit blobA blobB node trash cut copy paste')}<tool-grip></tool-grip>
          ${it('labelOn labelPin labelA labelEye labelMove labelRot labelEdit')}<tool-grip></tool-grip>${it('csw')}<tool-grip w="14"></tool-grip>${it('python')}</tool-row>
      </div>
      <div class="main"><side-tools></side-tools><layers-panel></layers-panel><div class="split"><tool-grip w="7"></tool-grip></div><map-canvas></map-canvas></div>
      <status-bar></status-bar>`;
  }
});

def('push-button', class extends Base {
  css() {
    return `:host{display:grid;place-items:center;width:83px;height:25px;border:1px solid #b1afac;border-radius:4px;background:linear-gradient(#fff,#fafafa 55%,#ececeb);box-shadow:0 1px 1px rgba(0,0,0,.08)}
      :host([accent]){background:linear-gradient(#ffaf90,#f79670);border-color:#b97a62}`;
  }
});

def('measure-dialog', class extends Base {
  css() {
    return `:host{position:absolute;left:173px;top:149px;width:359px;height:228px;display:flex;flex-direction:column;background:#f2f1f0;border-radius:6px 6px 0 0;box-shadow:0 6px 24px rgba(0,0,0,.42)}
      .body{padding:9px 9px 9px;display:flex;flex-direction:column}
      .table{height:87px;width:341px;border:1px solid #b9b7b4;background:#fff}
      .th,.td{display:flex;justify-content:flex-end;padding-right:4px}
      .th{height:25px;align-items:center;border-bottom:1px solid #a9a7a4;background:linear-gradient(#fff,#efeeed);padding-top:2px}
      .td{margin-top:-1px;padding-right:3px;color:#3c3c3c}
      .total{display:flex;align-items:center;margin-top:7px;height:25px}
      .combo{display:flex;align-items:center;justify-content:space-between;width:119px;height:25px;margin-left:8px;border:1px solid #b1afac;border-radius:4px;background:linear-gradient(#fff,#fafafa 55%,#ececeb);padding:0 5px 0 4px}
      .combo svg{margin-top:3px}
      .info{display:flex;align-items:center;height:20px;margin-top:7px;gap:9px;padding-left:4px}
      .btns{display:flex;margin-top:10px;padding:0 1px;gap:8px}.btns push-button:nth-child(2){margin-left:auto}
      u{text-underline-offset:3px}`;
  }
  html() {
    return `<title-bar dim><fit-text w="130">Measure (OTF off)</fit-text></title-bar>
      <div class="body">
        <div class="table"><div class="th"><fit-text w="127">Segments [meters]</fit-text></div><div class="td"><fit-text w="44">61.121</fit-text></div></div>
        <div class="total"><fit-text w="33">Total</fit-text><text-field w="124" h="25" align="right" style="margin-left:56px"><fit-text w="61">61.121 m</fit-text></text-field>
          <div class="combo"><fit-text w="47">meters</fit-text><svg width="8" height="15"><path d="m1 4.500 3-3.500 3 3.500zM1 10.500h6L4 14z" fill="#666"/></svg></div></div>
        <div class="info"><svg width="9" height="12"><path d="M1 .5 8 6l-7 5.500z" fill="#2d2d2d"/></svg><fit-text w="27">Info</fit-text></div>
        <div class="btns"><push-button accent><fit-text w="31">Help</fit-text></push-button><push-button><fit-text w="30"><u>N</u>ew</fit-text></push-button><push-button><fit-text w="36"><u>C</u>lose</fit-text></push-button></div>
      </div>`;
  }
});

/* Text run that tracks its letters so that it fills a given width. */
def('fit-text', class extends Base {
  css() { return `:host{display:inline-block;white-space:nowrap;flex:none}span{display:inline-block}`; }
  html() { return '<span><slot></slot></span>'; }
  ready() {
    const s = this.shadowRoot.querySelector('span'), w = +this.getAttribute('w'), n = this.textContent.length;
    if (w) { s.style.letterSpacing = (w - s.getBoundingClientRect().width) / n + 'px'; this.style.width = w + 'px'; }
  }
});
</script>
</body>
</html>
